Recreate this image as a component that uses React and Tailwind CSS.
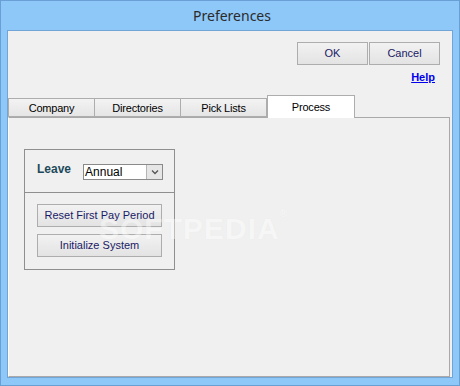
import React from 'react'

const ui = { fontFamily: '"Liberation Sans", Arial, sans-serif' }

function WinButton({ children, className = '' }) {
  return (
    <button
      className={`flex items-center justify-center border border-[#adadad] bg-gradient-to-b from-[#f2f2f2] to-[#e3e3e3] text-[11px] text-[#1a1a66] ${className}`}
      style={ui}
    >
      {children}
    </button>
  )
}

function Tab({ label, active }) {
  if (active) {
    return (
      <div className="relative z-10 -mb-px flex h-[23px] w-[88px] items-start justify-center border border-b-0 border-[#adadad] bg-white pt-[3px] text-[11px] text-black">
        {label}
      </div>
    )
  }
  return (
    <div className="-ml-px flex h-[19px] w-[87px] items-center justify-center border border-[#adadad] bg-gradient-to-b from-[#f3f3f3] to-[#e5e5e5] pt-px text-[11px] text-black first:ml-0">
      {label}
    </div>
  )
}

export default function App() {
  return (
    <div className="flex h-[386px] w-[460px] flex-col border border-[#6a9fd6] bg-[#8ec8f8]" style={ui}>
      <div
        className="flex h-[29px] items-center justify-center pl-[4px] text-[14px] text-[#2b2b2b]"
        style={{ fontFamily: '"Noto Sans", "Open Sans", sans-serif' }}
      >
        Preferences
      </div>
      <div className="mx-[6px] mb-[7px] flex flex-1 flex-col border border-[#72a4d8] bg-[#f0f0f0]">
        <div className="flex justify-end gap-px pr-[12px] pt-[11px]">
          <WinButton className="h-[23px] w-[71px]">OK</WinButton>
          <WinButton className="h-[23px] w-[71px]">Cancel</WinButton>
        </div>
        <div className="mt-[6px] flex justify-end pr-[17px]">
          <span className="text-[11px] font-bold leading-[13px] text-[#0000ee] underline">Help</span>
        </div>
        <div className="mt-[11px] flex items-end tracking-[-0.2px]">
          <Tab label="Company" />
          <Tab label="Directories" />
          <Tab label="Pick Lists" />
          <Tab label="Process" active />
        </div>
        <div className="relative mr-[2px] flex-1 border-b border-l border-r border-t border-[#a9a9a9] border-l-white">
          <div className="ml-[15px] mt-[31px] flex h-[121px] w-[151px] flex-col border border-[#8f8f8f]">
            <div className="flex h-[43px] items-center gap-[12px] border-b border-[#8f8f8f] pl-[12px] pt-[1px]">
              <span className="mb-[5px] text-[12px] font-bold text-[#1d4a5a]">Leave</span>
              <div className="flex h-[16px] w-[80px] border border-[#8a8a8a] bg-white">
                <span className="flex-1 pl-px text-[12px] leading-[14px] text-black">Annual</span>
                <span className="flex w-[16px] items-center justify-center border-l border-[#b5b5b5] bg-[#e6e6e6]">
                  <svg width="8" height="6" viewBox="0 0 8 6">
                    <path d="M1 1.5 L4 4.5 L7 1.5" fill="none" stroke="#555" strokeWidth="1.3" />
                  </svg>
                </span>
              </div>
            </div>
            <div className="flex flex-col gap-[7px] pl-[12px] pt-[11px]">
              <WinButton className="h-[23px] w-[125px]">Reset First Pay Period</WinButton>
              <WinButton className="h-[23px] w-[125px]">Initialize System</WinButton>
            </div>
          </div>
          <div
            className="pointer-events-none absolute left-[90px] top-[88px] text-[30px] font-bold tracking-[1px] text-white opacity-40"
            style={{ textShadow: '0 0 1px #e0e0e0' }}
          >
            SOFTPEDIA<span className="align-top text-[10px]">®</span>
          </div>
        </div>
      </div>
    </div>
  )
}
